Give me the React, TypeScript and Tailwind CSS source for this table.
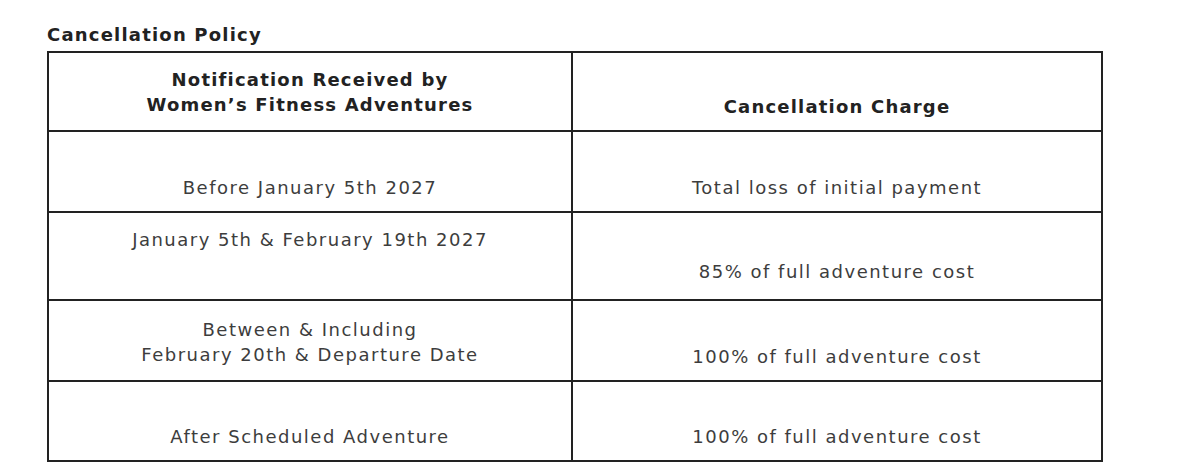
export default function App() {
  const font = { fontFamily: "'DejaVu Sans', Inter, sans-serif" }
  return (
    <div className="min-h-[476px] w-[1200px] bg-white pl-[47px] pt-[22px] text-[#3d3d3d]" style={font}>
      <h2 className="mb-[4px] text-[18px] font-bold leading-[25px] tracking-[1.2px] text-[#222]">Cancellation Policy</h2>
      <div className="grid w-[1056px] grid-cols-[524px_1fr] border-2 border-[#222]">
        {/* header */}
        <div className="flex h-[79px] flex-col items-center justify-end border-r-2 border-b-2 border-[#222] pb-[13px] text-center text-[18px] font-bold leading-[25px] tracking-[1.2px] text-[#222]">
          <span>Notification Received by</span>
          <span>Women’s Fitness Adventures</span>
        </div>
        <div className="flex h-[79px] items-end justify-center border-b-2 border-[#222] pb-[11px] text-[18px] font-bold leading-[25px] tracking-[1.2px] text-[#222]">
          Cancellation Charge
        </div>

        {/* row 1 */}
        <div className="flex h-[81px] items-end justify-center border-r-2 border-b-2 border-[#222] pb-[11px] text-[18px] leading-[25px] tracking-[1.5px]">
          Before January 5th 2027
        </div>
        <div className="flex h-[81px] items-end justify-center border-b-2 border-[#222] pb-[11px] text-[18px] leading-[25px] tracking-[1.5px]">
          Total loss of initial payment
        </div>

        {/* row 2 */}
        <div className="flex h-[88px] items-start justify-center border-r-2 border-b-2 border-[#222] pt-[14px] text-[18px] leading-[25px] tracking-[1.5px]">
          January 5th &amp; February 19th 2027
        </div>
        <div className="flex h-[88px] items-end justify-center border-b-2 border-[#222] pb-[15px] text-[18px] leading-[25px] tracking-[1.5px]">
          85% of full adventure cost
        </div>

        {/* row 3 */}
        <div className="flex h-[81px] flex-col items-center justify-end border-r-2 border-b-2 border-[#222] pb-[13px] text-center text-[18px] leading-[25px] tracking-[1.5px]">
          <span>Between &amp; Including</span>
          <span>February 20th &amp; Departure Date</span>
        </div>
        <div className="flex h-[81px] items-end justify-center border-b-2 border-[#222] pb-[11px] text-[18px] leading-[25px] tracking-[1.5px]">
          100% of full adventure cost
        </div>

        {/* row 4 */}
        <div className="flex h-[78px] items-end justify-center border-r-2 border-[#222] pb-[11px] text-[18px] leading-[25px] tracking-[1.5px]">
          After Scheduled Adventure
        </div>
        <div className="flex h-[78px] items-end justify-center pb-[11px] text-[18px] leading-[25px] tracking-[1.5px]">
          100% of full adventure cost
        </div>
      </div>
    </div>
  )
}
